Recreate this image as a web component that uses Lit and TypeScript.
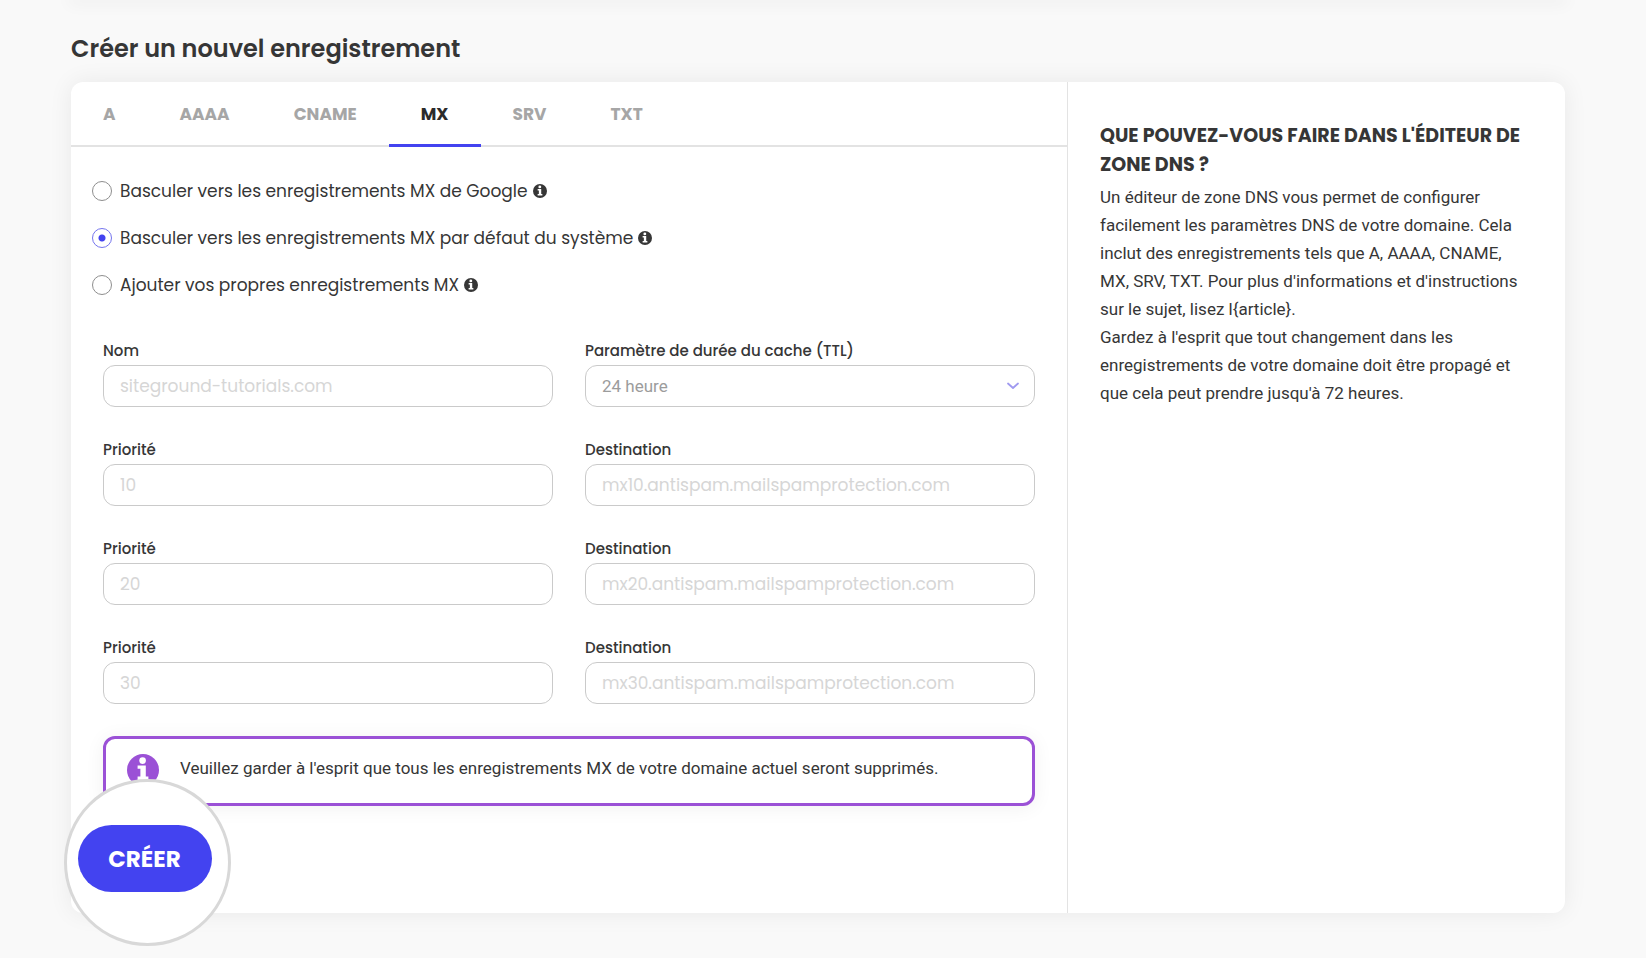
import { LitElement, html, css, svg } from "lit";
import { customElement, state } from "lit/decorators.js";
import { classMap } from "lit/directives/class-map.js";

const TABS = ["A", "AAAA", "CNAME", "MX", "SRV", "TXT"];

const MODES = [
  "Basculer vers les enregistrements MX de Google",
  "Basculer vers les enregistrements MX par défaut du système",
  "Ajouter vos propres enregistrements MX",
];

const RECORDS = [
  { priority: "10", destination: "mx10.antispam.mailspamprotection.com" },
  { priority: "20", destination: "mx20.antispam.mailspamprotection.com" },
  { priority: "30", destination: "mx30.antispam.mailspamprotection.com" },
];

// Filled disc with a slab "i" cut in white
const infoGlyph = svg`
  <circle cx="16" cy="16" r="16" fill="currentColor"></circle>
  <circle cx="15.6" cy="6.6" r="3.3" fill="#fff"></circle>
  <path d="M10.6 11.4h8.2v11.2h2.6v3.4H10.6v-3.4h2.8v-7.8h-2.8z" fill="#fff"></path>
`;

@customElement("app-root")
export class AppRoot extends LitElement {
  @state() private tab = "MX";
  @state() private mode = 1;

  static styles = css`
    :host {
      --ink: #363636;
      --accent: #4343f0;
      --notice: #9b51d6;
      --line: #e3e3e3;
      --display: Poppins, Inter, sans-serif;
      --body: Roboto, sans-serif;
      display: block;
      min-height: 100vh;
      overflow: hidden;
      box-sizing: border-box;
      background: #f9f9f9;
      color: var(--ink);
      font-family: var(--body);
    }
    * {
      box-sizing: border-box;
    }
    .page {
      padding: 0 81px 45px 71px;
      font-feature-settings: "cv11";
    }
    .previous {
      height: 0;
      box-shadow: 0 0 16px 3px rgba(0, 0, 0, 0.07);
    }
    h1 {
      margin: 0;
      padding: 31px 0 15px;
      font: 600 24px/36px var(--display);
    }
    .card {
      display: grid;
      grid-template-columns: 2fr 1fr;
      border-radius: 12px;
      background: #fff;
      box-shadow: 0 0 24px rgba(0, 0, 0, 0.07);
    }
    .tabs {
      display: flex;
      height: 65px;
      border-bottom: 2px solid var(--line);
    }
    .tab {
      height: 65px;
      padding: 2px 32px 0;
      border: 0;
      border-bottom: 3px solid transparent;
      background: none;
      color: #a6a6a6;
      font: 700 17px/24px var(--display);
      font-feature-settings: inherit;
      cursor: pointer;
    }
    .tab.active {
      border-color: var(--accent);
      color: #2b2b2b;
    }
    .modes {
      display: grid;
      gap: 19px;
      margin: 0;
      padding: 30px 21px 0;
      border: 0;
    }
    .mode {
      display: flex;
      align-items: center;
      height: 28px;
      font: 400 17px/28px var(--display);
    }
    .mode input {
      appearance: none;
      width: 20px;
      height: 20px;
      margin: 0 8px 0 0;
      border: 1px solid #8e8e8e;
      border-radius: 50%;
      background: #fff;
    }
    .mode input:checked {
      border-color: #7474ee;
      background: radial-gradient(circle, var(--accent) 3px, #fff 4px);
    }
    .mode svg {
      width: 14px;
      height: 14px;
      margin-left: 5px;
    }
    .fields {
      display: grid;
      grid-template-columns: 1fr 1fr;
      gap: 32px;
      padding: 41px 32px 32px;
    }
    .field {
      display: grid;
      gap: 3px;
    }
    .field label {
      font: 500 15px/22px var(--display);
    }
    .field input,
    .field select {
      appearance: none;
      width: 100%;
      height: 42px;
      padding: 0 16px;
      border: 1px solid #cacaca;
      border-radius: 12px;
      background: #fff;
      color: var(--ink);
      font: 400 17px/24px var(--display);
      font-feature-settings: inherit;
    }
    .field input::placeholder {
      color: #d6d6d6;
      opacity: 1;
    }
    .field select {
      color: #9c9c9c;
      font-family: var(--body);
    }
    .select {
      display: grid;
      align-items: center;
    }
    .select > * {
      grid-area: 1 / 1;
    }
    .select svg {
      justify-self: end;
      width: 12px;
      height: 8px;
      margin-right: 16px;
      pointer-events: none;
    }
    .notice {
      display: flex;
      gap: 21px;
      margin: 0 32px;
      padding: 15px 21px 17px;
      border: 3px solid var(--notice);
      border-radius: 12px;
      box-shadow: 0 2px 20px rgba(0, 0, 0, 0.06);
    }
    .notice svg {
      flex: none;
      width: 32px;
      height: 32px;
      color: var(--notice);
    }
    .notice p {
      margin: 0;
      font-size: 17px;
      line-height: 28px;
    }
    .actions {
      position: relative;
      height: 107px;
    }
    /* Magnified call to action lying over the corner of the card */
    .lens {
      position: absolute;
      left: -7px;
      bottom: -33px;
      display: grid;
      place-items: center;
      width: 167px;
      height: 167px;
      padding: 0 6px 8px 0;
      border: 3px solid #d8d8d8;
      border-radius: 50%;
      background: #fff;
    }
    .create {
      width: 134px;
      height: 67px;
      padding: 0;
      border: 0;
      border-radius: 34px;
      background: var(--accent);
      color: #fff;
      font: 700 23px/32px var(--display);
      cursor: pointer;
    }
    aside {
      padding: 39px 32px;
      border-left: 1px solid var(--line);
    }
    h2 {
      margin: 0 0 4px;
      font: 700 19px/29px var(--display);
    }
    aside p {
      margin: 0;
      font-size: 17px;
      line-height: 28px;
    }
    @media (max-width: 900px) {
      .page {
        padding: 0 16px 48px;
      }
      .card {
        grid-template-columns: 1fr;
      }
    }
  `;

  private renderField(id: string, label: string, placeholder: string) {
    return html`
      <div class="field">
        <label for=${id}>${label}</label>
        <input id=${id} type="text" placeholder=${placeholder} />
      </div>
    `;
  }

  render() {
    return html`
      <div class="page">
        <div class="previous"></div>
        <h1>Créer un nouvel enregistrement</h1>
        <section class="card">
          <form @submit=${(e: Event) => e.preventDefault()}>
            <div class="tabs" role="tablist">
              ${TABS.map(
                (t) => html`<button
                  type="button"
                  role="tab"
                  aria-selected=${t === this.tab ? "true" : "false"}
                  class=${classMap({ tab: true, active: t === this.tab })}
                  @click=${() => (this.tab = t)}
                >${t}</button>`
              )}
            </div>
            <fieldset class="modes">
              ${MODES.map(
                (m, i) => html`<label class="mode">
                  <input
                    type="radio"
                    name="mode"
                    .checked=${i === this.mode}
                    @change=${() => (this.mode = i)}
                  />
                  <span>${m}</span>
                  <svg viewBox="0 0 32 32" aria-hidden="true">${infoGlyph}</svg>
                </label>`
              )}
            </fieldset>
            <div class="fields">
              ${this.renderField("name", "Nom", "siteground-tutorials.com")}
              <div class="field">
                <label for="ttl">Paramètre de durée du cache (TTL)</label>
                <div class="select">
                  <select id="ttl">
                    <option>24 heure</option>
                  </select>
                  <svg viewBox="0 0 12 8" aria-hidden="true">
                    <path d="M1 1.5 6 6l5-4.500" fill="none" stroke="#a09af0" stroke-width="1.800" stroke-linecap="round" stroke-linejoin="round"></path>
                  </svg>
                </div>
              </div>
              ${RECORDS.map(
                (r, i) => html`
                  ${this.renderField(`priority-${i}`, "Priorité", r.priority)}
                  ${this.renderField(`destination-${i}`, "Destination", r.destination)}
                `
              )}
            </div>
            <div class="notice">
              <svg viewBox="0 0 32 32" aria-hidden="true">${infoGlyph}</svg>
              <p>
                Veuillez garder à l'esprit que tous les enregistrements MX de votre domaine actuel
                seront supprimés.
              </p>
            </div>
            <div class="actions">
              <div class="lens"><button class="create" type="submit">CRÉER</button></div>
            </div>
          </form>
          <aside>
            <h2>QUE POUVEZ-VOUS FAIRE DANS L'ÉDITEUR DE ZONE DNS ?</h2>
            <p>
              Un éditeur de zone DNS vous permet de configurer facilement les paramètres DNS de
              votre domaine. Cela inclut des enregistrements tels que A, AAAA, CNAME, MX, SRV, TXT.
              Pour plus d'informations et d'instructions sur le sujet, lisez l{article}.
            </p>
            <p>
              Gardez à l'esprit que tout changement dans les enregistrements de votre domaine doit
              être propagé et que cela peut prendre jusqu'à 72 heures.
            </p>
          </aside>
        </section>
      </div>
    `;
  }
}
